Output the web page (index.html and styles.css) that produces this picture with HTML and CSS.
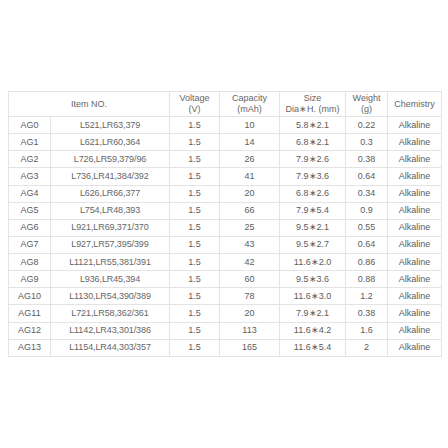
FILE: index.html
```html
<!DOCTYPE html>
<html>
<head>
<meta charset="utf-8">
<link rel="stylesheet" href="styles.css">
</head>
<body>
<div class="page">
<table class="spec">
<colgroup>
<col class="c-ag"><col class="c-item"><col class="c-volt"><col class="c-cap"><col class="c-size"><col class="c-wt"><col class="c-chem">
</colgroup>
<thead>
<tr class="head">
<th colspan="2">Item NO.</th>
<th>Voltage<br>(V)</th>
<th>Capacity<br>(mAh)</th>
<th>Size<br>Dia∗H. (mm)</th>
<th>Weight<br>(g)</th>
<th>Chemistry</th>
</tr>
</thead>
<tbody>
<tr><td>AG0</td><td class="item">L521,LR63,379</td><td>1.5</td><td>10</td><td>5.8∗2.1</td><td>0.22</td><td>Alkaline</td></tr>
<tr><td>AG1</td><td class="item">L621,LR60,364</td><td>1.5</td><td>14</td><td>6.8∗2.1</td><td>0.3</td><td>Alkaline</td></tr>
<tr><td>AG2</td><td class="item">L726,LR59,379/96</td><td>1.5</td><td>26</td><td>7.9∗2.6</td><td>0.38</td><td>Alkaline</td></tr>
<tr><td>AG3</td><td class="item">L736,LR41,384/392</td><td>1.5</td><td>41</td><td>7.9∗3.6</td><td>0.64</td><td>Alkaline</td></tr>
<tr><td>AG4</td><td class="item">L626,LR66,377</td><td>1.5</td><td>20</td><td>6.8∗2.6</td><td>0.34</td><td>Alkaline</td></tr>
<tr><td>AG5</td><td class="item">L754,LR48,393</td><td>1.5</td><td>66</td><td>7.9∗5.4</td><td>0.9</td><td>Alkaline</td></tr>
<tr><td>AG6</td><td class="item">L921,LR69,371/370</td><td>1.5</td><td>25</td><td>9.5∗2.1</td><td>0.55</td><td>Alkaline</td></tr>
<tr><td>AG7</td><td class="item">L927,LR57,395/399</td><td>1.5</td><td>43</td><td>9.5∗2.7</td><td>0.64</td><td>Alkaline</td></tr>
<tr><td>AG8</td><td class="item">L1121,LR55,381/391</td><td>1.5</td><td>42</td><td>11.6∗2.0</td><td>0.86</td><td>Alkaline</td></tr>
<tr><td>AG9</td><td class="item">L936,LR45,394</td><td>1.5</td><td>60</td><td>9.5∗3.6</td><td>0.88</td><td>Alkaline</td></tr>
<tr><td>AG10</td><td class="item">L1130,LR54,390/389</td><td>1.5</td><td>78</td><td>11.6∗3.0</td><td>1.2</td><td>Alkaline</td></tr>
<tr><td>AG11</td><td class="item">L721,LR58,362/361</td><td>1.5</td><td>20</td><td>7.9∗2.1</td><td>0.38</td><td>Alkaline</td></tr>
<tr><td>AG12</td><td class="item">L1142,LR43,301/386</td><td>1.5</td><td>113</td><td>11.6∗4.2</td><td>1.6</td><td>Alkaline</td></tr>
<tr><td>AG13</td><td class="item">L1154,LR44,303/357</td><td>1.5</td><td>165</td><td>11.6∗5.4</td><td>2</td><td>Alkaline</td></tr>
</tbody>
</table>
</div>
</body>
</html>
```
FILE: styles.css
```css
html, body {
  margin: 0;
  padding: 0;
  background: #ffffff;
}
.page {
  padding: 91px 7px 0 8px;
}
.spec {
  border-collapse: collapse;
  table-layout: fixed;
  width: 433px;
  font-family: "Liberation Sans", Arial, sans-serif;
  font-size: 9px;
  color: #5c5c5c;
}
.c-ag { width: 42px; }
.c-item { width: 119px; }
.c-volt { width: 50px; }
.c-cap { width: 60px; }
.c-size { width: 66px; }
.c-wt { width: 42px; }
.c-chem { width: 54px; }
.spec th, .spec td {
  border: 1px solid #e4e4e4;
  text-align: center;
  vertical-align: middle;
  padding: 0;
  font-weight: normal;
}
.spec th {
  line-height: 11px;
  color: #666666;
}
.head {
  height: 25px;
}
.spec tbody tr {
  height: 17.14px;
}
.spec td {
  line-height: 11px;
}
.item {
  color: #666666;
  letter-spacing: -0.1px;
}
```
